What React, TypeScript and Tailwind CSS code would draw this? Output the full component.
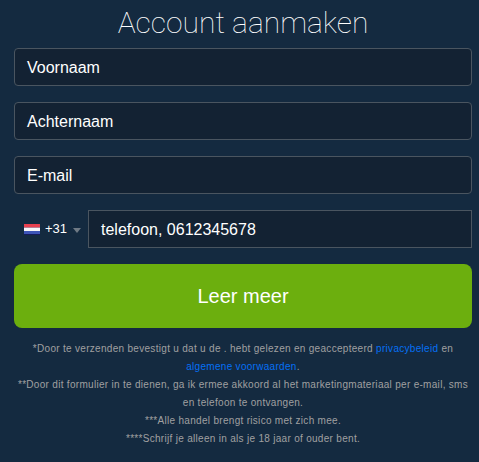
import React from 'react';

const Field = ({ label, className }: { label: string; className?: string }) => (
    <div
        className={`h-[38px] flex items-center px-3 pt-[1px] bg-[#132233] border border-[#4a5560] rounded-[4px] text-white text-base ${className ?? ''}`}
    >
        {label}
    </div>
);

const App = () => {
    return (
        <div className="w-[479px] h-[462px] overflow-hidden bg-[#142a40] pl-[14px] pr-[7px] font-['Liberation_Sans',Arial,sans-serif]">
            <h1 className="h-[48px] pt-[4px] text-center text-[30px] leading-[38px] font-thin text-white font-['Roboto',sans-serif]">
                Account aanmaken
            </h1>

            <div className="flex flex-col gap-4">
                <Field label="Voornaam" />
                <Field label="Achternaam" />
                <Field label="E-mail" />

                <div className="flex items-center">
                    <div className="w-[74px] flex items-center pl-[10px] text-white text-[13px]">
                        <svg width="16" height="11" viewBox="0 0 16 11" className="mr-[5px]">
                            <rect width="16" height="11" fill="#141a5c" />
                            <rect y="0" width="16" height="3.6" fill="#e8404f" />
                            <rect y="3.6" width="16" height="3.4" fill="#f6f6f8" />
                            <rect y="7" width="16" height="3" fill="#3d55b8" />
                        </svg>
                        <span>+31</span>
                        <span className="ml-[6px] mt-[2px] w-0 h-0 border-x-[4px] border-x-transparent border-t-[5px] border-t-[#6f7a85]" />
                    </div>
                    <Field label="telefoon, 0612345678" className="flex-1 rounded-none" />
                </div>

                <button className="h-[64px] w-full rounded-lg bg-[#6caf0e] text-white text-xl">
                    Leer meer
                </button>
            </div>

            <div className="mt-[12px] text-center text-[10px] leading-[18px] tracking-[0.3px] text-[#a0a0a0]">
                <p>
                    *Door te verzenden bevestigt u dat u de . hebt gelezen en geaccepteerd{' '}
                    <a className="text-[#0570f5]">privacybeleid</a> en{' '}
                    <a className="text-[#0570f5]">algemene voorwaarden</a>.
                </p>
                <p>
                    **Door dit formulier in te dienen, ga ik ermee akkoord al het marketingmateriaal per e-mail, sms
                    en telefoon te ontvangen.
                </p>
                <p>***Alle handel brengt risico met zich mee.</p>
                <p>****Schrijf je alleen in als je 18 jaar of ouder bent.</p>
            </div>
        </div>
    );
};

export default App;
